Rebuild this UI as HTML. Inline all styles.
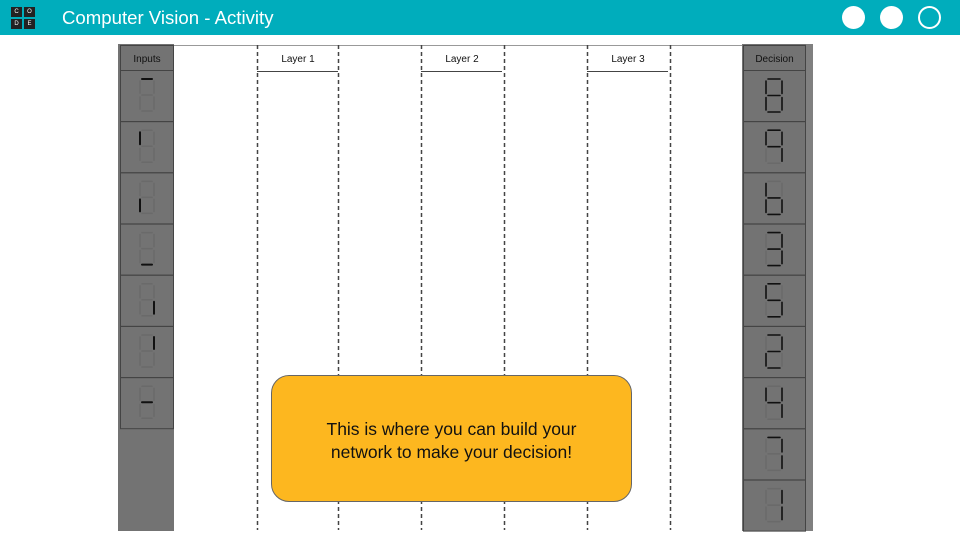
<!DOCTYPE html>
<html><head><meta charset="utf-8"><style>
body{margin:0;width:960px;height:540px;overflow:hidden;background:#fff;font-family:"Liberation Sans",sans-serif;position:relative}
.hdr{position:absolute;left:0;top:0;width:960px;height:35px;background:#00adbc}
.ttl{position:absolute;left:62px;top:7px;color:#fff;font-size:18.6px}
.logo{position:absolute;left:11px;top:7px;width:24px;height:22px}
.logo div{position:absolute;width:11px;height:10px;background:#222;color:#fff;font-size:6px;text-align:center;line-height:10px}
.dot{position:absolute;top:6px;width:23px;height:23px;border-radius:50%;background:#fff;box-sizing:border-box}
.box{position:absolute;left:271px;top:375px;width:361px;height:127px;box-sizing:border-box;border:1px solid #666;border-radius:18px;background:#fdb71f;text-align:center;font-size:17.5px;line-height:23px;padding-top:42px;color:#111}
</style></head><body>
<div class="hdr"></div>
<div class="logo"><div style="left:0;top:0">C</div><div style="left:13px;top:0">O</div><div style="left:0;top:12px">D</div><div style="left:13px;top:12px">E</div></div>
<div class="ttl">Computer Vision - Activity</div>
<div class="dot" style="left:842px"></div><div class="dot" style="left:880px"></div>
<div class="dot" style="left:918px;background:none;border:2.5px solid #fff"></div>
<svg id="s" width="960" height="540" style="position:absolute;left:0;top:0">
<line x1="174" y1="45.5" x2="742" y2="45.5" stroke="#999" stroke-width="1"/>
<rect x="118" y="44" width="56" height="487" fill="#737373"/>
<rect x="742" y="44" width="71" height="487" fill="#737373"/>
<rect x="806" y="44" width="7" height="487" fill="#808080"/>
<rect x="120.5" y="45.5" width="53" height="25" fill="#737373" stroke="#444"/>
<text x="147" y="62" font-size="10" text-anchor="middle" fill="#111">Inputs</text>
<rect x="743.5" y="45.5" width="62" height="25" fill="#737373" stroke="#444"/>
<text x="774.5" y="62" font-size="10" text-anchor="middle" fill="#111">Decision</text>
</svg>
<div class="box">This is where you can build your<br>network to make your decision!</div>
<script>
var s=document.getElementById('s'),ns='http://www.w3.org/2000/svg';
function el(t,a){var e=document.createElementNS(ns,t);for(var k in a)e.setAttribute(k,a[k]);s.appendChild(e);return e}
[257,338,421,504,587,670].forEach(function(x){el('line',{x1:x+.5,y1:45,x2:x+.5,y2:530,stroke:'#444','stroke-width':1.5,'stroke-dasharray':'4 3'})});
[[257,'Layer 1'],[421,'Layer 2'],[587,'Layer 3']].forEach(function(l){el('line',{x1:l[0],y1:71.5,x2:l[0]+81,y2:71.5,stroke:'#444'});var t=el('text',{x:l[0]+41,y:62,'font-size':10,'text-anchor':'middle',fill:'#111'});t.textContent=l[1]});
function seg(cx,top,w,h,on,sw){var x0=cx-w/2,x1=cx+w/2,m=top+h/2,b=top+h;
 var S={a:[x0+2,top,x1-2,top],b:[x1,top+2,x1,m-2],c:[x1,m+2,x1,b-2],d:[x0+2,b,x1-2,b],e:[x0,m+2,x0,b-2],f:[x0,top+2,x0,m-2],g:[x0+2,m,x1-2,m]};
 for(var k in S){var p=S[k];el('line',{x1:p[0],y1:p[1],x2:p[2],y2:p[3],stroke:on.indexOf(k)>=0?'#111':'#6a6a6a','stroke-width':on.indexOf(k)>=0?sw:1.5,'stroke-linecap':'round'})}}
var ins=['a','f','e','d','c','b','g'];
ins.forEach(function(o,i){var y=70+i*51.2;el('rect',{x:120.5,y:y+.5,width:53,height:51,fill:'#737373',stroke:'#444'});seg(147,y+9,14,32,o,2)});
var dec=['abcdefg','abcfg','fedcg','abcdg','afgcd','abged','fgbc','abc','bc'];
dec.forEach(function(o,i){var y=70+i*51.2;el('rect',{x:743.5,y:y+.5,width:62,height:51,fill:'#737373',stroke:'#444'});seg(774,y+9,16,33,o,1.6)});
</script>
</body></html>
